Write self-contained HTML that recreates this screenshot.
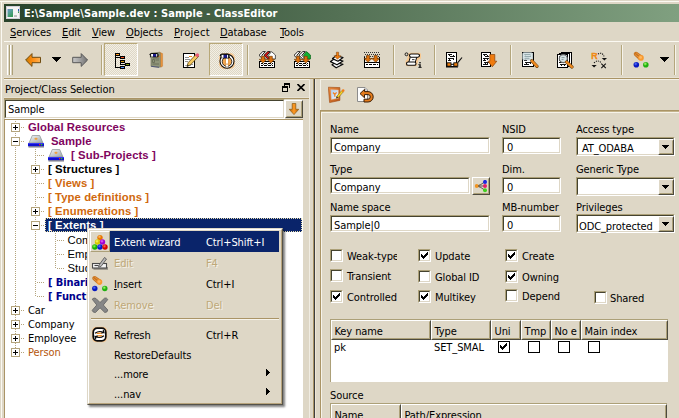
<!DOCTYPE html>
<html><head><meta charset="utf-8"><title>ClassEditor</title>
<style>
:root{--face:#ded7c6;--hi:#ffffff;--lt:#f1efe2;--sh:#aca078;--dk:#4c4a3e;}
*{box-sizing:border-box;margin:0;padding:0}
html,body{width:679px;height:418px;overflow:hidden;background:var(--face)}
body{position:relative;font-family:"DejaVu Sans Condensed","Liberation Sans",sans-serif;font-size:11px;color:#000;line-height:13px;letter-spacing:-0.1px}
.a{position:absolute;white-space:nowrap}
.t{position:absolute;white-space:nowrap;height:13px;line-height:13px}
u{text-decoration:underline;text-underline-offset:1px}
.ar{font-family:"Liberation Sans",sans-serif;letter-spacing:0.08px}
.b{font-weight:bold}
.sunk{border:1px solid;border-color:var(--sh) var(--hi) var(--hi) var(--sh);background:#fff}
.sunk>i{position:absolute;left:0;top:0;right:0;bottom:0;border:1px solid;border-color:#45432f var(--face) var(--face) #45432f}
.raised{border:1px solid;border-color:var(--hi) var(--dk) var(--dk) var(--hi);background:var(--face)}
.raised>i{position:absolute;left:0;top:0;right:0;bottom:0;border:1px solid;border-color:var(--face) var(--sh) var(--sh) var(--face)}
.vsep{position:absolute;width:2px;border-left:1px solid #b4a67c;border-right:1px solid #f6f3ea}
.hsep{position:absolute;height:2px;border-top:1px solid #aa9466;border-bottom:1px solid #f6f3ea}
.cb{position:absolute;width:13px;height:13px;border:1px solid;border-color:var(--sh) var(--hi) var(--hi) var(--sh);background:#fff}
.cb>i{position:absolute;left:0;top:0;right:0;bottom:0;border:1px solid;border-color:#45432f var(--face) var(--face) #45432f}
.cb svg,.fcb svg{position:absolute;left:2px;top:2px}
.fcb{position:absolute;width:12px;height:12px;border:1px solid #000;background:#fff}
.fcb svg{left:1px;top:1px}
.tree .t{font-size:11px}
.dot-h{position:absolute;height:1px;background-image:linear-gradient(to right,#b4a47c 50%,transparent 50%);background-size:2px 1px}
.dot-v{position:absolute;width:1px;background-image:linear-gradient(to bottom,#b4a47c 50%,transparent 50%);background-size:1px 2px}
.pm{position:absolute;width:9px;height:9px;border:1px solid #b4a47c;background:#fff}
.pm:before{content:"";position:absolute;left:1px;top:3px;width:5px;height:1px;background:#000}
.pm.p:after{content:"";position:absolute;left:3px;top:1px;width:1px;height:5px;background:#000}
.press{border:1px solid;border-color:#b8a878 #fff #fff #b8a878;background-color:var(--face);background-image:linear-gradient(45deg,#f3efe4 25%,transparent 25%,transparent 75%,#f3efe4 75%),linear-gradient(45deg,#f3efe4 25%,transparent 25%,transparent 75%,#f3efe4 75%);background-size:2px 2px;background-position:0 0,1px 1px}
</style></head><body>
<!-- window frame -->
<div class="a" style="left:0;top:1px;width:679px;height:1px;background:#fbf9f2"></div>
<div class="a" style="left:1px;top:1px;width:1px;height:417px;background:#fbf9f2"></div>
<div class="a" style="left:4px;top:4px;width:675px;height:18px;background:linear-gradient(to right,#28422a 0px,#80a080 675px)"></div>
<svg class="a" style="left:6px;top:6px" width="14" height="13" viewBox="0 0 14 13">
<rect x="0" y="0" width="14" height="13" fill="#f6f4f4"/><rect x="0.500" y="0.500" width="13" height="12" fill="none" stroke="#d4d0d8"/>
<defs><linearGradient id="ig" x1="0" y1="0" x2="0.600" y2="1"><stop offset="0" stop-color="#6a8cc8"/><stop offset="0.400" stop-color="#5aa0a0"/><stop offset="1" stop-color="#3a9a5a"/></linearGradient></defs>
<rect x="1.500" y="3" width="5.500" height="8" fill="url(#ig)"/><rect x="8" y="9.300" width="3" height="1.500" fill="#b0b0b0"/><rect x="12" y="3" width="1" height="2.500" fill="#2c58b8"/><rect x="12" y="5.500" width="1" height="1.500" fill="#3a9a4a"/></svg>
<div class="t b" style="left:24px;top:7px;color:#fff;font-size:11px;letter-spacing:0.07px">E:\Sample\Sample.dev : Sample - ClassEditor</div>
<div class="t " style="left:10px;top:26px;"><u>S</u>ervices</div>
<div class="t " style="left:62px;top:26px;"><u>E</u>dit</div>
<div class="t " style="left:92px;top:26px;"><u>V</u>iew</div>
<div class="t " style="left:126px;top:26px;"><u>O</u>bjects</div>
<div class="t " style="left:174px;top:26px;letter-spacing:0.3px"><u>P</u>roject</div>
<div class="t " style="left:220px;top:26px;"><u>D</u>atabase</div>
<div class="t " style="left:280px;top:26px;"><u>T</u>ools</div>
<div class="a" style="left:4px;top:41px;width:675px;height:1px;background:#fbf9f2"></div>
<div class="a" style="left:7px;top:45px;width:3px;height:30px;border-left:1px solid #fff;border-right:1px solid var(--sh);"></div>
<div class="a" style="left:10px;top:45px;width:3px;height:30px;border-left:1px solid #fff;border-right:1px solid var(--sh);"></div>
<div class="vsep" style="left:101px;top:45px;height:30px"></div>
<div class="vsep" style="left:247px;top:45px;height:30px"></div>
<div class="vsep" style="left:393px;top:45px;height:30px"></div>
<div class="vsep" style="left:434px;top:45px;height:30px"></div>
<div class="vsep" style="left:510px;top:45px;height:30px"></div>
<div class="vsep" style="left:621px;top:45px;height:30px"></div>
<div class="vsep" style="left:674px;top:45px;height:30px"></div>
<div class="a" style="left:4px;top:77px;width:675px;height:1px;background:#e7e2d4"></div>
<div class="a" style="left:4px;top:78px;width:675px;height:1px;background:#aa9466"></div>
<div class="a" style="left:4px;top:79px;width:306px;height:1px;background:#f6f3ea"></div>
<div class="a" style="left:309px;top:79px;width:1px;height:340px;background:#f0ece2"></div>
<div class="a press" style="left:104px;top:43px;width:34px;height:33px"></div>
<div class="a press" style="left:209px;top:43px;width:34px;height:33px"></div>
<svg class="a" style="left:52px;top:57px" width="9" height="5" viewBox="0 0 9 5" shape-rendering="crispEdges"><path d="M0 0h9v1h-1v1h-1v1h-1v1h-1v1h-1v-1h-1v-1h-1v-1h-1v-1h-1z" fill="#000"/></svg>
<svg class="a" style="left:660px;top:57px" width="9" height="5" viewBox="0 0 9 5" shape-rendering="crispEdges"><path d="M0 0h9v1h-1v1h-1v1h-1v1h-1v1h-1v-1h-1v-1h-1v-1h-1v-1h-1z" fill="#000"/></svg>
<svg class="a" style="left:25px;top:53px" width="18" height="18" viewBox="0 0 18 18"><defs><linearGradient id="gb" x1="0" y1="0" x2="1" y2="0"><stop offset="0" stop-color="#b87c08"/><stop offset="0.300" stop-color="#f08408"/><stop offset="0.600" stop-color="#ff9420"/><stop offset="1" stop-color="#ffb458"/></linearGradient></defs>
<path d="M0.600 7 L7 0.600 L7 4.300 L15.500 4.300 L15.500 9.700 L7 9.700 L7 13.400 Z" fill="url(#gb)" stroke="#6e4c12" stroke-width="1"/></svg>
<svg class="a" style="left:72px;top:53px" width="18" height="18" viewBox="0 0 18 18"><defs><linearGradient id="gf" x1="0" y1="0" x2="1" y2="0"><stop offset="0" stop-color="#c8c8c8"/><stop offset="0.500" stop-color="#a0a0a0"/><stop offset="1" stop-color="#707070"/></linearGradient></defs>
<path d="M15.600 7 L9.200 0.600 L9.200 4.300 L0.700 4.300 L0.700 9.700 L9.200 9.700 L9.200 13.400 Z" fill="url(#gf)" stroke="#585858" stroke-width="1"/></svg>
<svg class="a" style="left:114px;top:52px" width="18" height="18" viewBox="0 0 18 18"><g shape-rendering="crispEdges"><rect x="1" y="1" width="1" height="15" fill="#000"/>
<rect x="1" y="1" width="5" height="3" fill="#000"/><rect x="2" y="2" width="3" height="1" fill="#ff9a20"/>
<rect x="2" y="5" width="4" height="1" fill="#000"/><rect x="6" y="4" width="5" height="3" fill="#000"/><rect x="7" y="5" width="3" height="1" fill="#f05020"/>
<rect x="6" y="8" width="5" height="3" fill="#000"/><rect x="7" y="9" width="3" height="1" fill="#cc9410"/>
<rect x="6" y="11" width="1" height="2" fill="#000"/><rect x="6" y="12" width="5" height="1" fill="#000"/>
<rect x="11" y="11" width="5" height="3" fill="#000"/><rect x="12" y="12" width="3" height="1" fill="#80980c"/>
<rect x="2" y="15" width="4" height="1" fill="#000"/><rect x="6" y="14" width="5" height="3" fill="#000"/><rect x="7" y="15" width="3" height="1" fill="#4888f0"/></g></svg>
<svg class="a" style="left:148px;top:51px" width="18" height="18" viewBox="0 0 18 18"><path d="M3 2.200 L11.500 1.300 L12.800 2.200 L12.800 15.800 L11 16.300 L3 15.300 Z" fill="#8f9478" stroke="#70745c" stroke-width="0.600"/>
<path d="M11.500 1.300 L14.600 2.600 L14.600 15.200 L12.800 16.200 L12.800 2.300 Z" fill="#f09a40" stroke="#b86c20" stroke-width="0.400"/>
<path d="M4.500 8.500 h2 v3 h-2 z M7.500 9 h3.500 M4.500 13 h6.500 M5 7 h6" stroke="#6c705a" stroke-width="1" fill="none"/><path d="M9 6 l2.500 -0.800" stroke="#f08820" stroke-width="1.200"/>
<path d="M3.200 15.300 L11 16.300" stroke="#404878" stroke-width="0.800"/><g transform="translate(1.3,1.8)"><path d="M0 1.800 q0.500 -1.600 2.500 -1.700 l5 0 q1.800 0.200 1.800 1.800 l0 1.600 q0 1 -1.200 1 l-5 0 l-1 -0.600 l-1.200 0.900 l-0.400 -0.700 l0.700 -1 z" fill="#0a0a0a"/><rect x="1.800" y="1.200" width="2" height="2.600" fill="#fff"/><rect x="3.800" y="1.200" width="3" height="2.600" fill="#1a1a90"/><rect x="6.900" y="1.200" width="1" height="2.600" fill="#fff"/></g></svg>
<svg class="a" style="left:182px;top:52px" width="18" height="18" viewBox="0 0 18 18"><g shape-rendering="crispEdges"><rect x="1" y="1" width="12" height="15" fill="#000"/><rect x="2" y="2" width="10" height="13" fill="#fff"/>
<rect x="3" y="5" width="4" height="1" fill="#909090"/><rect x="7" y="4" width="3" height="1" fill="#f08818"/><rect x="3" y="7" width="5" height="1" fill="#909090"/><rect x="3" y="9" width="3" height="1" fill="#909090"/><rect x="8" y="12" width="3" height="1" fill="#909090"/><rect x="3" y="13" width="6" height="1" fill="#b0b0b0"/></g>
<path d="M5 14.5 L6.2 10.6 L14.2 2.2 L16.6 4.4 L8.6 12.8 Z" fill="#f4c860" stroke="#5a4410" stroke-width="0.8"/>
<path d="M13 3.4 L14.6 1.6 q1 -0.8 2 0.2 q1 1 0.2 2 L15.4 5.4 Z" fill="#e85a78"/>
<path d="M5 14.5 L5.6 12.4 L7 13.8 Z" fill="#222"/></svg>
<svg class="a" style="left:218px;top:52px" width="18" height="18" viewBox="0 0 18 18"><rect x="1" y="1" width="16" height="16" rx="5" fill="#f8c488" opacity="0.850"/>
<circle cx="9" cy="9.200" r="7" fill="#fff" stroke="#0a0a0a" stroke-width="1.100"/><circle cx="9" cy="9.600" r="4.800" fill="#f4a850" stroke="#0a0a0a" stroke-width="0.800"/>
<rect x="7.300" y="5.500" width="3.400" height="9" fill="#c08850" opacity="0.600"/>
<rect x="8" y="4.800" width="2" height="6.800" fill="#fff"/><rect x="8" y="12.600" width="2" height="2" fill="#fff"/><g transform="translate(1.6,1.5) scale(1.08,1.12)"><g transform="translate(0,0)"><path d="M0 1.800 q0.500 -1.600 2.500 -1.700 l5 0 q1.800 0.200 1.800 1.800 l0 1.600 q0 1 -1.200 1 l-5 0 l-1 -0.600 l-1.200 0.900 l-0.400 -0.700 l0.700 -1 z" fill="#0a0a0a"/><rect x="1.800" y="1.200" width="2" height="2.600" fill="#fff"/><rect x="3.800" y="1.200" width="3" height="2.600" fill="#1a1a90"/><rect x="6.900" y="1.200" width="1" height="2.600" fill="#fff"/></g></g></svg>
<svg class="a" style="left:258px;top:51px" width="18" height="18" viewBox="0 0 18 18"><g shape-rendering="crispEdges"><rect x="1" y="10" width="16" height="7" fill="#000"/><rect x="2" y="11" width="14" height="5" fill="#fff"/><rect x="3" y="12" width="1" height="1" fill="#000"/><rect x="4" y="12" width="1" height="1" fill="#000"/><rect x="6" y="12" width="1" height="1" fill="#000"/><rect x="7" y="12" width="1" height="1" fill="#000"/><rect x="8" y="12" width="1" height="1" fill="#000"/><rect x="10" y="12" width="1" height="1" fill="#000"/><rect x="11" y="12" width="1" height="1" fill="#000"/><rect x="12" y="12" width="1" height="1" fill="#000"/><rect x="14" y="12" width="1" height="1" fill="#000"/><rect x="3" y="14" width="1" height="1" fill="#000"/><rect x="4" y="14" width="1" height="1" fill="#000"/><rect x="6" y="14" width="1" height="1" fill="#000"/><rect x="7" y="14" width="1" height="1" fill="#000"/><rect x="8" y="14" width="1" height="1" fill="#000"/><rect x="10" y="14" width="1" height="1" fill="#000"/><rect x="11" y="14" width="1" height="1" fill="#000"/><rect x="12" y="14" width="1" height="1" fill="#000"/><rect x="14" y="14" width="1" height="1" fill="#000"/><rect x="5" y="13" width="1" height="1" fill="#000" opacity="0.600"/><rect x="9" y="13" width="1" height="1" fill="#000" opacity="0.600"/><rect x="13" y="13" width="1" height="1" fill="#000" opacity="0.600"/></g><path d="M4.8 0.600 L1.0 4.300 L4.8 8 L7.3 8 L3.8 4.300 L7.3 0.600 Z" fill="#fff" stroke="#111" stroke-width="0.900"/><path d="M13.500 0.600 L17.400 4 L17.400 8 L12.500 8 L10.500 4.300 Z" fill="#fff" stroke="#333" stroke-width="0.800"/><path d="M9.8 0.600 L6.0 4.300 L9.8 8 L12.3 8 L8.8 4.300 L12.3 0.600 Z" fill="#f01010" stroke="#111" stroke-width="0.900"/><path d="M3.5 5.3 h3 v3 h2.200 l-3.700 3.800 l-3.700 -3.800 h2.200 z" fill="#dc700c" stroke="#7a4008" stroke-width="0.700"/><path d="M11.3 5.3 h3 v3 h2.200 l-3.700 3.800 l-3.700 -3.800 h2.200 z" fill="#dc700c" stroke="#7a4008" stroke-width="0.700"/></svg>
<svg class="a" style="left:293px;top:51px" width="18" height="18" viewBox="0 0 18 18"><g shape-rendering="crispEdges"><rect x="1" y="10" width="16" height="7" fill="#000"/><rect x="2" y="11" width="14" height="5" fill="#fff"/><rect x="3" y="12" width="1" height="1" fill="#000"/><rect x="4" y="12" width="1" height="1" fill="#000"/><rect x="6" y="12" width="1" height="1" fill="#000"/><rect x="7" y="12" width="1" height="1" fill="#000"/><rect x="8" y="12" width="1" height="1" fill="#000"/><rect x="10" y="12" width="1" height="1" fill="#000"/><rect x="11" y="12" width="1" height="1" fill="#000"/><rect x="12" y="12" width="1" height="1" fill="#000"/><rect x="14" y="12" width="1" height="1" fill="#000"/><rect x="3" y="14" width="1" height="1" fill="#000"/><rect x="4" y="14" width="1" height="1" fill="#000"/><rect x="6" y="14" width="1" height="1" fill="#000"/><rect x="7" y="14" width="1" height="1" fill="#000"/><rect x="8" y="14" width="1" height="1" fill="#000"/><rect x="10" y="14" width="1" height="1" fill="#000"/><rect x="11" y="14" width="1" height="1" fill="#000"/><rect x="12" y="14" width="1" height="1" fill="#000"/><rect x="14" y="14" width="1" height="1" fill="#000"/><rect x="5" y="13" width="1" height="1" fill="#000" opacity="0.600"/><rect x="9" y="13" width="1" height="1" fill="#000" opacity="0.600"/><rect x="13" y="13" width="1" height="1" fill="#000" opacity="0.600"/></g><path d="M4.8 0.600 L1.0 4.300 L4.8 8 L7.3 8 L3.8 4.300 L7.3 0.600 Z" fill="#fff" stroke="#111" stroke-width="0.900"/><path d="M13.500 0.600 L17.400 4 L17.400 8 L12.500 8 L10.500 4.300 Z" fill="#10b030" stroke="#0a6a1a" stroke-width="0.800"/><path d="M9.8 0.600 L6.0 4.300 L9.8 8 L12.3 8 L8.8 4.300 L12.3 0.600 Z" fill="#fff" stroke="#111" stroke-width="0.900"/><path d="M3.5 5.3 h3 v3 h2.200 l-3.700 3.800 l-3.700 -3.800 h2.200 z" fill="#dc700c" stroke="#7a4008" stroke-width="0.700"/><path d="M11.3 5.3 h3 v3 h2.200 l-3.700 3.800 l-3.700 -3.800 h2.200 z" fill="#dc700c" stroke="#7a4008" stroke-width="0.700"/></svg>
<svg class="a" style="left:329px;top:51px" width="18" height="18" viewBox="0 0 18 18"><path d="M3 13.800 L6.500 11.500 L14 13.300 L7.200 16.800 Z" fill="#fff" stroke="#0a0a0a" stroke-width="1.200" stroke-linejoin="round"/>
<path d="M1.500 10.600 L5.500 7.800 L14 10 L8 13.800 Z" fill="#fff" stroke="#0a0a0a" stroke-width="1.200" stroke-linejoin="round"/>
<path d="M3.500 7.600 L7.500 4.600 L14 6.600 L9 10.200 Z" fill="#fff" stroke="#0a0a0a" stroke-width="1.200" stroke-linejoin="round"/>
<path d="M7.400 1.200 h2.200 v3.600 h2.400 l-3.500 3.500 l-3.500 -3.500 h2.400 z" fill="#f07c10" stroke="#7a3c08" stroke-width="0.500"/></svg>
<svg class="a" style="left:363px;top:51px" width="18" height="18" viewBox="0 0 18 18"><g shape-rendering="crispEdges"><rect x="1" y="1" width="1" height="1" fill="#333"/><rect x="3" y="1" width="1" height="1" fill="#333"/><rect x="5" y="1" width="1" height="1" fill="#333"/><rect x="7" y="1" width="1" height="1" fill="#333"/><rect x="9" y="1" width="1" height="1" fill="#333"/><rect x="11" y="1" width="1" height="1" fill="#333"/><rect x="13" y="1" width="1" height="1" fill="#333"/><rect x="15" y="1" width="1" height="1" fill="#333"/><rect x="2" y="3" width="1" height="1" fill="#333"/><rect x="4" y="3" width="1" height="1" fill="#333"/><rect x="6" y="3" width="1" height="1" fill="#333"/><rect x="8" y="3" width="1" height="1" fill="#333"/><rect x="10" y="3" width="1" height="1" fill="#333"/><rect x="12" y="3" width="1" height="1" fill="#333"/><rect x="14" y="3" width="1" height="1" fill="#333"/><rect x="16" y="3" width="1" height="1" fill="#333"/><rect x="1" y="5" width="1" height="1" fill="#333"/><rect x="3" y="5" width="1" height="1" fill="#333"/><rect x="5" y="5" width="1" height="1" fill="#333"/><rect x="7" y="5" width="1" height="1" fill="#333"/><rect x="9" y="5" width="1" height="1" fill="#333"/><rect x="11" y="5" width="1" height="1" fill="#333"/><rect x="13" y="5" width="1" height="1" fill="#333"/><rect x="15" y="5" width="1" height="1" fill="#333"/><rect x="2" y="7" width="1" height="1" fill="#333"/><rect x="4" y="7" width="1" height="1" fill="#333"/><rect x="6" y="7" width="1" height="1" fill="#333"/><rect x="8" y="7" width="1" height="1" fill="#333"/><rect x="10" y="7" width="1" height="1" fill="#333"/><rect x="12" y="7" width="1" height="1" fill="#333"/><rect x="14" y="7" width="1" height="1" fill="#333"/><rect x="16" y="7" width="1" height="1" fill="#333"/><rect x="1" y="9" width="1" height="1" fill="#333"/><rect x="3" y="9" width="1" height="1" fill="#333"/><rect x="5" y="9" width="1" height="1" fill="#333"/><rect x="7" y="9" width="1" height="1" fill="#333"/><rect x="9" y="9" width="1" height="1" fill="#333"/><rect x="11" y="9" width="1" height="1" fill="#333"/><rect x="13" y="9" width="1" height="1" fill="#333"/><rect x="15" y="9" width="1" height="1" fill="#333"/><rect x="1" y="6" width="1" height="6" fill="#000"/><rect x="16" y="6" width="1" height="6" fill="#000"/><rect x="2" y="9" width="14" height="3" fill="#f4f0e6"/></g><g shape-rendering="crispEdges"><rect x="1" y="11" width="16" height="6" fill="#000"/><rect x="2" y="12" width="14" height="4" fill="#fff"/><rect x="3" y="13" width="1" height="1" fill="#000"/><rect x="4" y="13" width="1" height="1" fill="#000"/><rect x="6" y="13" width="1" height="1" fill="#000"/><rect x="7" y="13" width="1" height="1" fill="#000"/><rect x="8" y="13" width="1" height="1" fill="#000"/><rect x="10" y="13" width="1" height="1" fill="#000"/><rect x="11" y="13" width="1" height="1" fill="#000"/><rect x="12" y="13" width="1" height="1" fill="#000"/><rect x="14" y="13" width="1" height="1" fill="#000"/></g><path d="M3.5 4.5 h3 v3 h2.200 l-3.700 3.800 l-3.700 -3.800 h2.200 z" fill="#dc700c" stroke="#7a4008" stroke-width="0.700"/><path d="M11.2 4.5 h3 v3 h2.200 l-3.700 3.800 l-3.700 -3.800 h2.200 z" fill="#dc700c" stroke="#7a4008" stroke-width="0.700"/></svg>
<svg class="a" style="left:404px;top:51px" width="18" height="18" viewBox="0 0 18 18"><path d="M4.500 1.800 h11 q1.500 0 1.500 1.500 v3.500 q0 1.500 -1.500 1.500 h-1 l-1 4.500 q0 2.500 -2 2.500 h-8 q-2 0 -2 -2 v-3 q0 -1.500 1.500 -1.500 l0.800 -4 q0.200 -3 1.700 -3z" fill="#f8c890"/>
<path d="M6.300 6 L4.800 11.200 L11.300 11.200 L12.800 6 Z" fill="#fff"/><path d="M6.300 6 L4.800 11.200 M12.800 6 L11.300 11.200" stroke="#0a0a0a" stroke-width="1"/>
<rect x="5.500" y="3" width="10" height="3.200" rx="1.600" fill="#fff" stroke="#0a0a0a" stroke-width="1.100"/>
<rect x="2.500" y="11" width="9.500" height="3.300" rx="1.650" fill="#fff" stroke="#0a0a0a" stroke-width="1.100"/>
<path d="M8 8.600 h2.500" stroke="#0a0a0a" stroke-width="0.800"/>
<circle cx="2.500" cy="3.300" r="1.450" fill="none" stroke="#0a0a0a" stroke-width="0.900"/>
<rect x="15.300" y="11" width="1.400" height="1.400" fill="#0a0a0a"/><rect x="15.300" y="13.200" width="1.400" height="3" fill="#0a0a0a"/><rect x="14.400" y="13.200" width="1" height="0.900" fill="#0a0a0a"/><rect x="14.400" y="15.900" width="3.200" height="0.900" fill="#0a0a0a"/></svg>
<svg class="a" style="left:445px;top:51px" width="18" height="18" viewBox="0 0 18 18"><g shape-rendering="crispEdges"><rect x="1" y="1" width="11" height="15" fill="#000"/><rect x="2" y="2" width="9" height="13" fill="#fff"/><rect x="3" y="3" width="4" height="1" fill="#111"/><rect x="4" y="4" width="1" height="1" fill="#111"/><rect x="8" y="4" width="1" height="1" fill="#111"/><rect x="5" y="5" width="5" height="1" fill="#111"/><rect x="3" y="7" width="6" height="1" fill="#111"/><rect x="4" y="8" width="1" height="1" fill="#111"/><rect x="8" y="8" width="1" height="1" fill="#111"/><rect x="3" y="9" width="3" height="1" fill="#111"/><rect x="4" y="11" width="6" height="1" fill="#111"/><rect x="5" y="12" width="1" height="1" fill="#111"/><rect x="8" y="12" width="1" height="1" fill="#111"/><rect x="3" y="13" width="5" height="1" fill="#111"/></g><rect x="2" y="11" width="9" height="4" fill="#fff"/><rect x="2" y="11.800" width="4" height="3.400" fill="#f08010" stroke="#0a0a0a" stroke-width="0.900"/><rect x="8.800" y="11.800" width="4" height="3.400" fill="#f08010" stroke="#0a0a0a" stroke-width="0.900"/><path d="M6 13.300 h3 M1 16 h12" stroke="#0a0a0a" stroke-width="1"/><path d="M13 11.300 L17 6.500" stroke="#0a0a0a" stroke-width="1.100"/></svg>
<svg class="a" style="left:480px;top:51px" width="18" height="18" viewBox="0 0 18 18"><g shape-rendering="crispEdges"><rect x="1" y="1" width="10" height="15" fill="#000"/><rect x="2" y="2" width="8" height="13" fill="#fff"/><rect x="3" y="3" width="4" height="1" fill="#111"/><rect x="4" y="4" width="1" height="1" fill="#111"/><rect x="7" y="4" width="1" height="1" fill="#111"/><rect x="5" y="5" width="4" height="1" fill="#111"/><rect x="3" y="7" width="6" height="1" fill="#111"/><rect x="4" y="8" width="1" height="1" fill="#111"/><rect x="7" y="8" width="1" height="1" fill="#111"/><rect x="3" y="9" width="3" height="1" fill="#111"/><rect x="4" y="11" width="5" height="1" fill="#111"/><rect x="5" y="12" width="1" height="1" fill="#111"/><rect x="7" y="12" width="1" height="1" fill="#111"/><rect x="3" y="13" width="5" height="1" fill="#111"/></g><path d="M9.800 3.500 h5 v6.700 h2 l-4.500 5.600 l-4.500 -5.600 h2 z" fill="#f07c10" stroke="#8a4208" stroke-width="0.700"/></svg>
<svg class="a" style="left:521px;top:51px" width="18" height="18" viewBox="0 0 18 18"><g shape-rendering="crispEdges"><rect x="1" y="1" width="12" height="15" fill="#000"/><rect x="2" y="2" width="10" height="13" fill="#fff"/><rect x="3" y="3" width="4" height="1" fill="#111"/><rect x="4" y="4" width="1" height="1" fill="#111"/><rect x="9" y="4" width="1" height="1" fill="#111"/><rect x="5" y="5" width="5" height="1" fill="#111"/><rect x="3" y="7" width="6" height="1" fill="#111"/><rect x="4" y="8" width="1" height="1" fill="#111"/><rect x="9" y="8" width="1" height="1" fill="#111"/><rect x="3" y="9" width="3" height="1" fill="#111"/><rect x="4" y="11" width="6" height="1" fill="#111"/><rect x="5" y="12" width="1" height="1" fill="#111"/><rect x="9" y="12" width="1" height="1" fill="#111"/><rect x="3" y="13" width="5" height="1" fill="#111"/></g><rect x="1.500" y="1.500" width="10" height="7.500" rx="1.500" fill="#d4e2e4" opacity="0.900" stroke="#9aaaac" stroke-width="0.600"/><path d="M3.500 3.500 h6 M3.500 5.500 h6.500 M4 7.300 h4" stroke="#98acb0" stroke-width="1"/><path d="M10.800 9.800 L16 15.300" stroke="#7a4a10" stroke-width="3.200" stroke-linecap="round"/><path d="M10.800 9.800 L16 15.300" stroke="#f08a20" stroke-width="2" stroke-linecap="round"/></svg>
<svg class="a" style="left:556px;top:51px" width="18" height="18" viewBox="0 0 18 18"><g shape-rendering="crispEdges"><rect x="5" y="1" width="11" height="13" fill="#000"/><rect x="6" y="2" width="9" height="11" fill="#fff"/><rect x="7" y="3" width="4" height="1" fill="#111"/><rect x="8" y="4" width="1" height="1" fill="#111"/><rect x="12" y="4" width="1" height="1" fill="#111"/><rect x="9" y="5" width="5" height="1" fill="#111"/><rect x="7" y="7" width="6" height="1" fill="#111"/><rect x="8" y="8" width="1" height="1" fill="#111"/><rect x="12" y="8" width="1" height="1" fill="#111"/><rect x="7" y="9" width="3" height="1" fill="#111"/><rect x="8" y="11" width="6" height="1" fill="#111"/></g><g shape-rendering="crispEdges"><rect x="3" y="2" width="11" height="14" fill="#000"/><rect x="4" y="3" width="9" height="12" fill="#fff"/><rect x="5" y="4" width="4" height="1" fill="#111"/><rect x="6" y="5" width="1" height="1" fill="#111"/><rect x="10" y="5" width="1" height="1" fill="#111"/><rect x="7" y="6" width="5" height="1" fill="#111"/><rect x="5" y="8" width="6" height="1" fill="#111"/><rect x="6" y="9" width="1" height="1" fill="#111"/><rect x="10" y="9" width="1" height="1" fill="#111"/><rect x="5" y="10" width="3" height="1" fill="#111"/><rect x="6" y="12" width="6" height="1" fill="#111"/><rect x="7" y="13" width="1" height="1" fill="#111"/><rect x="10" y="13" width="1" height="1" fill="#111"/></g><g shape-rendering="crispEdges"><rect x="1" y="3" width="11" height="13.5" fill="#000"/><rect x="2" y="4" width="9" height="11.5" fill="#fff"/><rect x="3" y="5" width="4" height="1" fill="#111"/><rect x="4" y="6" width="1" height="1" fill="#111"/><rect x="8" y="6" width="1" height="1" fill="#111"/><rect x="5" y="7" width="5" height="1" fill="#111"/><rect x="3" y="9" width="6" height="1" fill="#111"/><rect x="4" y="10" width="1" height="1" fill="#111"/><rect x="8" y="10" width="1" height="1" fill="#111"/><rect x="3" y="11" width="3" height="1" fill="#111"/><rect x="4" y="13" width="6" height="1" fill="#111"/><rect x="5" y="14" width="1" height="1" fill="#111"/><rect x="8" y="14" width="1" height="1" fill="#111"/></g><circle cx="7.300" cy="7.600" r="4" fill="#d8e4e4" stroke="#666" stroke-width="1.100"/><path d="M5.500 6.600 h3 M5.500 8.600 h2" stroke="#8a9a9a" stroke-width="1"/><path d="M10.600 11 L16 16" stroke="#7a4a10" stroke-width="3.200" stroke-linecap="round"/><path d="M10.600 11 L16 16" stroke="#f08a20" stroke-width="2" stroke-linecap="round"/></svg>
<svg class="a" style="left:590px;top:51px" width="18" height="18" viewBox="0 0 18 18"><text x="1.300" y="7.800" font-family="Liberation Sans,sans-serif" font-size="8.800" fill="#f08a18" stroke="#f08a18" stroke-width="0.600">R</text>
<path d="M8 3 q4.500 -2.500 6.500 3.500" fill="none" stroke="#111" stroke-width="1.100" stroke-dasharray="1.100 1.100"/><path d="M11.800 7 h5.200 l-2.600 2.500 z" fill="#111"/>
<path d="M4 12 q3.500 -4 7.500 0" fill="none" stroke="#111" stroke-width="1.100" stroke-dasharray="1.100 1.100"/><path d="M1.500 14 h5.200 l-2.600 2.600 z" fill="#111"/>
<path d="M11.300 12.700 l4.500 4.500 M15.800 12.700 l-4.500 4.500" stroke="#111" stroke-width="1.100"/></svg>
<svg class="a" style="left:632px;top:51px" width="18" height="18" viewBox="0 0 18 18"><g transform="translate(1.5,0.6)"><path d="M5.600 8.300 L0.600 3.600 Q-0.300 2.300 0.800 1 Q2 -0.200 3.600 0.500 L9.300 4.300 Z" fill="#c87420"/><path d="M1.200 2.600 L6 6.600 M2.600 1.200 L7.600 4.800" stroke="#e89440" stroke-width="0.900"/><circle cx="7.500" cy="6.300" r="2.800" fill="#f89a30"/><circle cx="7.100" cy="5.800" r="1.400" fill="#ffb860"/></g><defs><radialGradient id="bb1" cx="0.4" cy="0.35" r="0.65"><stop offset="0" stop-color="#5878ff"/><stop offset="0.55" stop-color="#0818c0"/><stop offset="1" stop-color="#0818c0"/></radialGradient></defs><circle cx="4.3" cy="13.7" r="2.8" fill="url(#bb1)"/><defs><radialGradient id="bb2" cx="0.4" cy="0.35" r="0.65"><stop offset="0" stop-color="#b0ff70"/><stop offset="0.55" stop-color="#20b010"/><stop offset="1" stop-color="#20b010"/></radialGradient></defs><circle cx="13.8" cy="13.7" r="2.8" fill="url(#bb2)"/></svg>
<div class="t " style="left:5px;top:83px;">Project/Class Selection</div>
<svg class="a" style="left:282px;top:83px" width="9" height="9" viewBox="0 0 9 9" shape-rendering="crispEdges"><path d="M2 0h6v5h-1v-3h-4v1h-1z" fill="#000"/><path d="M0 3h6v6h-6z M1 5v3h4v-3z" fill="#000" fill-rule="evenodd"/></svg>
<svg class="a" style="left:297px;top:84px" width="8" height="7" viewBox="0 0 8 7"><path d="M0.500 0 L7.500 7 M7.500 0 L0.500 7" stroke="#000" stroke-width="1.600"/></svg>
<div class="a" style="left:4px;top:97px;width:305px;height:1px;background:#e7e2d4"></div>
<div class="a" style="left:4px;top:98px;width:305px;height:1px;background:#aa9466"></div>
<div class="a sunk" style="left:4px;top:99px;width:281px;height:20px"><i></i></div>
<div class="t " style="left:8px;top:103px;">Sample</div>
<div class="a raised" style="left:285px;top:100px;width:18px;height:18px"><i></i></div>
<svg class="a" style="left:289px;top:103px" width="10" height="12" viewBox="0 0 10 12"><defs><linearGradient id="gd" x1="0" y1="0" x2="1" y2="0"><stop offset="0" stop-color="#c06400"/><stop offset="0.5" stop-color="#ff9a24"/><stop offset="1" stop-color="#b85c00"/></linearGradient></defs><path d="M3.200 0.500 h3.600 v5.800 h3 l-4.800 5.300 l-4.800 -5.300 h3 z" fill="url(#gd)" stroke="#8a5a14" stroke-width="0.700"/></svg>
<div class="a" style="left:4px;top:119px;width:299px;height:310px;background:#fff;border-left:1px solid #aa9466;border-top:1px solid #aa9466"></div>
<div class="dot-v" style="left:15px;top:120px;height:3px;background-position:0 1px"></div>
<div class="dot-v" style="left:15px;top:132px;height:5px;background-position:0 1px"></div>
<div class="dot-v" style="left:15px;top:146px;height:160px;background-position:0 1px"></div>
<div class="dot-v" style="left:15px;top:315px;height:5px;background-position:0 0px"></div>
<div class="dot-v" style="left:15px;top:329px;height:5px;background-position:0 0px"></div>
<div class="dot-v" style="left:15px;top:343px;height:5px;background-position:0 0px"></div>
<div class="pm p" style="left:11px;top:123px"></div>
<div class="dot-h" style="left:21px;top:127px;width:4px;background-position:0px 0"></div>
<div class="pm" style="left:11px;top:137px"></div>
<div class="dot-h" style="left:21px;top:141px;width:4px;background-position:0px 0"></div>
<div class="pm p" style="left:11px;top:306px"></div>
<div class="dot-h" style="left:21px;top:310px;width:4px;background-position:0px 0"></div>
<div class="pm p" style="left:11px;top:320px"></div>
<div class="dot-h" style="left:21px;top:324px;width:4px;background-position:0px 0"></div>
<div class="pm p" style="left:11px;top:334px"></div>
<div class="dot-h" style="left:21px;top:338px;width:4px;background-position:0px 0"></div>
<div class="pm p" style="left:11px;top:348px"></div>
<div class="dot-h" style="left:21px;top:352px;width:4px;background-position:0px 0"></div>
<div class="dot-v" style="left:35px;top:149px;height:16px;background-position:0 0px"></div>
<div class="dot-v" style="left:35px;top:174px;height:33px;background-position:0 1px"></div>
<div class="dot-v" style="left:35px;top:216px;height:5px;background-position:0 1px"></div>
<div class="dot-v" style="left:35px;top:230px;height:67px;background-position:0 1px"></div>
<div class="dot-h" style="left:36px;top:155px;width:9px;background-position:1px 0"></div>
<div class="pm p" style="left:31px;top:165px"></div>
<div class="dot-h" style="left:41px;top:169px;width:4px;background-position:0px 0"></div>
<div class="pm p" style="left:31px;top:207px"></div>
<div class="dot-h" style="left:41px;top:211px;width:4px;background-position:0px 0"></div>
<div class="pm" style="left:31px;top:221px"></div>
<div class="dot-h" style="left:41px;top:225px;width:4px;background-position:0px 0"></div>
<div class="dot-h" style="left:36px;top:183px;width:9px;background-position:1px 0"></div>
<div class="dot-h" style="left:36px;top:197px;width:9px;background-position:1px 0"></div>
<div class="dot-h" style="left:36px;top:282px;width:9px;background-position:1px 0"></div>
<div class="dot-h" style="left:36px;top:296px;width:9px;background-position:1px 0"></div>
<div class="dot-v" style="left:55px;top:232px;height:37px;background-position:0 1px"></div>
<div class="dot-h" style="left:56px;top:240px;width:9px;background-position:1px 0"></div>
<div class="dot-h" style="left:56px;top:254px;width:9px;background-position:1px 0"></div>
<div class="dot-h" style="left:56px;top:268px;width:9px;background-position:1px 0"></div>
<div class="a" style="left:45px;top:218px;width:257px;height:14px;background:#0a246a;outline:1px dotted #e8e0b0;outline-offset:-1px"></div>
<svg class="a" style="left:28px;top:135px" width="16" height="13" viewBox="0 0 16 13"><defs><linearGradient id="dg28" x1="0" y1="0" x2="1" y2="1"><stop offset="0" stop-color="#f4f6f6"/><stop offset="1" stop-color="#9aa4a8"/></linearGradient></defs><path d="M4.300 0.500 h7.400 l3.300 7.500 h-14 z" fill="url(#dg28)" stroke="#8a9094" stroke-width="0.700"/><ellipse cx="8" cy="3.800" rx="1.600" ry="1.100" fill="#f0a040"/><rect x="0" y="8" width="16" height="3.300" fill="#1010d0"/><rect x="0" y="8" width="16" height="1" fill="#3838f0"/><rect x="11" y="9" width="1.300" height="1.300" fill="#f02020"/><rect x="13" y="9" width="1.300" height="1.300" fill="#20d020"/><rect x="0.500" y="11.300" width="15.500" height="1.200" fill="#404048" opacity="0.700"/></svg>
<svg class="a" style="left:48px;top:149px" width="16" height="13" viewBox="0 0 16 13"><defs><linearGradient id="dg48" x1="0" y1="0" x2="1" y2="1"><stop offset="0" stop-color="#f4f6f6"/><stop offset="1" stop-color="#9aa4a8"/></linearGradient></defs><path d="M4.300 0.500 h7.400 l3.300 7.500 h-14 z" fill="url(#dg48)" stroke="#8a9094" stroke-width="0.700"/><ellipse cx="8" cy="3.800" rx="1.600" ry="1.100" fill="#f0a040"/><rect x="0" y="8" width="16" height="3.300" fill="#1010d0"/><rect x="0" y="8" width="16" height="1" fill="#3838f0"/><rect x="11" y="9" width="1.300" height="1.300" fill="#f02020"/><rect x="13" y="9" width="1.300" height="1.300" fill="#20d020"/><rect x="0.500" y="11.300" width="15.500" height="1.200" fill="#404048" opacity="0.700"/></svg>
<div class="t ar b" style="left:28px;top:121px;color:#80045e;font-size:11.300px;">Global Resources</div>
<div class="t ar b" style="left:51px;top:135px;color:#80045e;font-size:11.300px;">Sample</div>
<div class="t ar b" style="left:71px;top:149px;color:#80045e;font-size:11.300px;">[ Sub-Projects ]</div>
<div class="t ar b" style="left:48px;top:163px;color:#000;font-size:11.300px;">[ Structures ]</div>
<div class="t ar b" style="left:48px;top:177px;color:#d0680c;font-size:11.300px;">[ Views ]</div>
<div class="t ar b" style="left:48px;top:191px;color:#d0680c;font-size:11.300px;">[ Type definitions ]</div>
<div class="t ar b" style="left:48px;top:205px;color:#d0680c;font-size:11.300px;">[ Enumerations ]</div>
<div class="t ar b" style="left:48px;top:219px;color:#fff;font-size:11.300px;">[ Extents ]</div>
<div class="t ar" style="left:67.5px;top:234px;color:#000;font-size:11.300px;">Company</div>
<div class="t ar" style="left:67.5px;top:248px;color:#000;font-size:11.300px;">Employee</div>
<div class="t ar" style="left:67.5px;top:262px;color:#000;font-size:11.300px;">Student</div>
<div class="t b" style="left:48px;top:276px;color:#00008c;">[ Binaries ]</div>
<div class="t b" style="left:48px;top:290px;color:#00008c;">[ Functions ]</div>
<div class="t " style="left:28px;top:304px;color:#000;">Car</div>
<div class="t " style="left:28px;top:318px;color:#000;">Company</div>
<div class="t " style="left:28px;top:332px;color:#000;">Employee</div>
<div class="t " style="left:28px;top:346px;color:#b4560c;">Person</div>
<div class="a" style="left:313px;top:79px;width:1px;height:340px;background:#aa9466"></div>
<div class="a" style="left:314px;top:79px;width:1px;height:340px;background:#3e3e3e"></div>
<div class="a" style="left:315px;top:79px;width:1px;height:340px;background:#efe7d6"></div>
<div class="a" style="left:320px;top:79px;width:359px;height:1px;background:#f4f1e8"></div>
<div class="a" style="left:320px;top:79px;width:1px;height:31px;background:#f4f1e8"></div>
<div class="a" style="left:320px;top:110px;width:359px;height:1px;background:#aa9466"></div>
<div class="a" style="left:320px;top:111px;width:359px;height:1px;background:#c4b48c"></div>
<div class="a" style="left:320px;top:110px;width:1px;height:310px;background:#aa9466"></div>
<div class="a" style="left:321px;top:112px;width:358px;height:1px;background:#f6f3ea"></div>
<div class="a" style="left:321px;top:112px;width:1px;height:310px;background:#f6f3ea"></div>
<svg class="a" style="left:328px;top:86px" width="18" height="18" viewBox="0 0 18 18"><defs><linearGradient id="fr1" x1="0" y1="0" x2="1" y2="1"><stop offset="0" stop-color="#e8883c"/><stop offset="1" stop-color="#b85418"/></linearGradient><linearGradient id="fr2" x1="0" y1="0" x2="1" y2="1"><stop offset="0" stop-color="#a8ccf4"/><stop offset="1" stop-color="#f0f6fc"/></linearGradient></defs>
<path d="M0.300 1.200 L11.900 1.600 L11.900 14.400 L1.600 16.600 Z" fill="url(#fr1)" stroke="#a04c14" stroke-width="0.600"/>
<path d="M2.700 3.600 L10.300 4 L10.300 12.300 L3.300 13.600 Z" fill="url(#fr2)" stroke="#f0b080" stroke-width="0.500"/>
<path d="M5 6.500 L6.800 8.500 L8.600 6.300 M6.800 8.500 L6.800 10.800" stroke="#f08428" stroke-width="1.300" fill="none"/>
<path d="M8.800 10.300 L13.800 4.600 L15.300 5.900 L10.300 11.600 L8.300 12.300 Z" fill="#f8d428" stroke="#705010" stroke-width="0.500"/><path d="M8.300 12.300 L8.800 10.300 L10.300 11.600 Z" fill="#222"/><circle cx="15.200" cy="4.600" r="1.300" fill="#f47c18"/></svg>
<svg class="a" style="left:356px;top:86px" width="18" height="18" viewBox="0 0 18 18"><path d="M1.500 1.500 h7.500 l2.500 2.500 v11.500 h-10 z" fill="#fdfdfd" stroke="#8c8c8c" stroke-width="1"/><path d="M9 1.500 v2.500 h2.500" fill="#e8e8e8" stroke="#8c8c8c" stroke-width="0.700"/>
<path d="M4 7.600 L8.500 3.400 L8.500 5.600 L12 5.600 A5.200 5.200 0 0 1 12 16 L8 16 L8 13.200 L12 13.200 A2.300 2.300 0 0 0 12 8.600 L8.500 8.600 L8.500 11.800 Z" fill="#e47c1c" stroke="#3a1c04" stroke-width="1" stroke-linejoin="round"/></svg>
<div class="t " style="left:330px;top:123px;">Name</div>
<div class="a sunk" style="left:330px;top:137px;width:160px;height:17px"><i></i></div><div class="t " style="left:334px;top:141.0px;">Company</div>
<div class="t " style="left:330px;top:163px;">Type</div>
<div class="a sunk" style="left:330px;top:177px;width:140px;height:17px"><i></i></div><div class="t " style="left:334px;top:181.0px;">Company</div>
<div class="a raised" style="left:472px;top:177px;width:18px;height:18px"><i></i></div>
<svg class="a" style="left:474px;top:180px" width="14" height="13" viewBox="0 0 14 13"><path d="M3 6 Q7 5 10.500 2 M3 6 L10.500 6 M3 6 Q7 7 10.500 10" stroke="#222" stroke-width="0.700" fill="none"/>
<circle cx="2.700" cy="6" r="1.900" fill="#f09420"/><circle cx="11" cy="1.900" r="2" fill="#1c28e0"/><circle cx="11" cy="6" r="2" fill="#e0206c"/><circle cx="11" cy="10.200" r="2" fill="#40d020"/></svg>
<div class="t " style="left:330px;top:201px;">Name space</div>
<div class="a sunk" style="left:330px;top:215px;width:160px;height:17px"><i></i></div><div class="t " style="left:334px;top:219.0px;">Sample<span style="letter-spacing:0">|</span>0</div>
<div class="t " style="left:502px;top:123px;">NSID</div>
<div class="a sunk" style="left:502px;top:137px;width:59px;height:17px"><i></i></div><div class="t " style="left:507px;top:141.0px;">0</div>
<div class="t " style="left:502px;top:163px;">Dim.</div>
<div class="a sunk" style="left:502px;top:177px;width:59px;height:17px"><i></i></div><div class="t " style="left:507px;top:181.0px;">0</div>
<div class="t " style="left:502px;top:201px;">MB-number</div>
<div class="a sunk" style="left:502px;top:215px;width:59px;height:17px"><i></i></div><div class="t " style="left:507px;top:219.0px;">0</div>
<div class="t " style="left:576px;top:123px;">Access type</div>
<div class="a sunk" style="left:576px;top:137px;width:99px;height:19px"><i></i></div><div class="a raised" style="left:658px;top:139px;width:16px;height:16px"><i></i></div><svg class="a" style="left:662px;top:145px" width="7" height="4" viewBox="0 0 7 4" shape-rendering="crispEdges"><path d="M0 0h7v1h-1v1h-1v1h-1v1h-1v-1h-1v-1h-1v-1h-1z" fill="#000"/></svg><div class="t " style="left:582px;top:142px;">AT_ODABA</div>
<div class="t " style="left:576px;top:163px;">Generic Type</div>
<div class="a sunk" style="left:576px;top:177px;width:99px;height:19px"><i></i></div><div class="a raised" style="left:658px;top:179px;width:16px;height:16px"><i></i></div><svg class="a" style="left:662px;top:185px" width="7" height="4" viewBox="0 0 7 4" shape-rendering="crispEdges"><path d="M0 0h7v1h-1v1h-1v1h-1v1h-1v-1h-1v-1h-1v-1h-1z" fill="#000"/></svg>
<div class="t " style="left:576px;top:201px;">Privileges</div>
<div class="a sunk" style="left:576px;top:214px;width:99px;height:19px"><i></i></div><div class="a raised" style="left:658px;top:216px;width:16px;height:16px"><i></i></div><svg class="a" style="left:662px;top:222px" width="7" height="4" viewBox="0 0 7 4" shape-rendering="crispEdges"><path d="M0 0h7v1h-1v1h-1v1h-1v1h-1v-1h-1v-1h-1v-1h-1z" fill="#000"/></svg><div class="t " style="left:579px;top:220px;">ODC_protected</div>
<div class="cb" style="left:330px;top:249px"><i></i></div><div class="t " style="left:347px;top:249.5px;width:50px;overflow:hidden;">Weak-type</div>
<div class="cb" style="left:330px;top:269px"><i></i></div><div class="t " style="left:347px;top:269.5px;">Transient</div>
<div class="cb" style="left:330px;top:290px"><i></i><svg width="7" height="7" viewBox="0 0 7 7" shape-rendering="crispEdges"><path d="M0 2h1v1h1v1h1v-1h1v-1h1v-1h1v-1h1v3h-1v1h-1v1h-1v1h-1v1h-1v-1h-1v-1h-1z" fill="#000"/></svg></div><div class="t " style="left:347px;top:290.5px;">Controlled</div>
<div class="cb" style="left:418px;top:249px"><i></i><svg width="7" height="7" viewBox="0 0 7 7" shape-rendering="crispEdges"><path d="M0 2h1v1h1v1h1v-1h1v-1h1v-1h1v-1h1v3h-1v1h-1v1h-1v1h-1v1h-1v-1h-1v-1h-1z" fill="#000"/></svg></div><div class="t " style="left:435px;top:249.5px;">Update</div>
<div class="cb" style="left:418px;top:270px"><i></i></div><div class="t " style="left:435px;top:270.5px;">Global ID</div>
<div class="cb" style="left:418px;top:290px"><i></i><svg width="7" height="7" viewBox="0 0 7 7" shape-rendering="crispEdges"><path d="M0 2h1v1h1v1h1v-1h1v-1h1v-1h1v-1h1v3h-1v1h-1v1h-1v1h-1v1h-1v-1h-1v-1h-1z" fill="#000"/></svg></div><div class="t " style="left:435px;top:290.5px;">Multikey</div>
<div class="cb" style="left:505px;top:249px"><i></i><svg width="7" height="7" viewBox="0 0 7 7" shape-rendering="crispEdges"><path d="M0 2h1v1h1v1h1v-1h1v-1h1v-1h1v-1h1v3h-1v1h-1v1h-1v1h-1v1h-1v-1h-1v-1h-1z" fill="#000"/></svg></div><div class="t " style="left:522px;top:249.5px;">Create</div>
<div class="cb" style="left:505px;top:270px"><i></i><svg width="7" height="7" viewBox="0 0 7 7" shape-rendering="crispEdges"><path d="M0 2h1v1h1v1h1v-1h1v-1h1v-1h1v-1h1v3h-1v1h-1v1h-1v1h-1v1h-1v-1h-1v-1h-1z" fill="#000"/></svg></div><div class="t " style="left:522px;top:270.5px;">Owning</div>
<div class="cb" style="left:505px;top:289px"><i></i></div><div class="t " style="left:522px;top:289.5px;">Depend</div>
<div class="cb" style="left:594px;top:291px"><i></i></div><div class="t " style="left:610px;top:291.5px;">Shared</div>
<div class="a" style="left:330px;top:319px;width:338px;height:63px;background:#fff;border-left:1px solid var(--sh);border-top:1px solid var(--sh)"></div>
<div class="a raised" style="left:331px;top:320px;width:100px;height:20px"><i></i></div>
<div class="t " style="left:334.5px;top:325px;">Key name</div>
<div class="a raised" style="left:431px;top:320px;width:60px;height:20px"><i></i></div>
<div class="t " style="left:434.5px;top:325px;">Type</div>
<div class="a raised" style="left:491px;top:320px;width:30px;height:20px"><i></i></div>
<div class="t " style="left:494.5px;top:325px;">Uni</div>
<div class="a raised" style="left:521px;top:320px;width:30px;height:20px"><i></i></div>
<div class="t " style="left:524.5px;top:325px;">Tmp</div>
<div class="a raised" style="left:551px;top:320px;width:30px;height:20px"><i></i></div>
<div class="t " style="left:554.5px;top:325px;">No e</div>
<div class="a raised" style="left:581px;top:320px;width:87px;height:20px"><i></i></div>
<div class="t " style="left:584.5px;top:325px;">Main index</div>
<div class="t " style="left:334px;top:341px;">pk</div>
<div class="t " style="left:434px;top:341px;">SET_SMAL</div>
<div class="fcb" style="left:498px;top:341px"><svg width="7" height="7" viewBox="0 0 7 7" shape-rendering="crispEdges"><path d="M0 2h1v1h1v1h1v-1h1v-1h1v-1h1v-1h1v3h-1v1h-1v1h-1v1h-1v1h-1v-1h-1v-1h-1z" fill="#000"/></svg></div>
<div class="fcb" style="left:528px;top:341px"></div>
<div class="fcb" style="left:558px;top:341px"></div>
<div class="fcb" style="left:588px;top:341px"></div>
<div class="t " style="left:330px;top:389px;">Source</div>
<div class="a" style="left:330px;top:403px;width:337px;height:30px;background:#fff;border-left:1px solid var(--sh);border-top:1px solid var(--sh)"></div>
<div class="a raised" style="left:331px;top:404px;width:70px;height:20px"><i></i></div>
<div class="t " style="left:334.5px;top:409px;">Name</div>
<div class="a raised" style="left:401px;top:404px;width:266px;height:20px"><i></i></div>
<div class="t " style="left:404.5px;top:409px;">Path/Expression</div>
<div class="a" style="left:89px;top:230px;width:194px;height:175px;background:rgba(0,0,0,0.5);box-shadow:1px 1px 2px 1px rgba(0,0,0,0.5)"></div>
<div class="a" style="left:87px;top:228px;width:196px;height:177px;background:var(--face);border:1px solid;border-color:var(--face) #55534a #55534a var(--face)"><i style="position:absolute;left:0;top:0;right:0;bottom:0;border:1px solid;border-color:#fff #b8a47c #b8a47c #fff"></i></div>
<div class="a" style="left:110px;top:231px;width:169px;height:21px;background:#0a246a"></div>
<div class="a" style="left:90px;top:231px;width:20px;height:21px;border:1px solid;border-color:#fff var(--sh) var(--sh) #fff"></div>
<div class="hsep" style="left:91px;top:318px;width:188px"></div>
<div class="t " style="left:114px;top:236px;color:#fff">Extent wizard</div>
<div class="t " style="left:206px;top:236px;color:#fff">Ctrl+Shift+I</div>
<div class="t " style="left:114px;top:257px;color:#bea878;text-shadow:1px 1px 0 #f6f2e8">Edit</div>
<div class="t " style="left:206px;top:257px;color:#bea878;text-shadow:1px 1px 0 #f6f2e8">F4</div>
<div class="t " style="left:114px;top:278px;"><u>I</u>nsert</div>
<div class="t " style="left:206px;top:278px;">Ctrl+I</div>
<div class="t " style="left:114px;top:299px;color:#bea878;text-shadow:1px 1px 0 #f6f2e8">Remove</div>
<div class="t " style="left:206px;top:299px;color:#bea878;text-shadow:1px 1px 0 #f6f2e8">Del</div>
<div class="t " style="left:114px;top:329px;">Refresh</div>
<div class="t " style="left:206px;top:329px;">Ctrl+R</div>
<div class="t " style="left:114px;top:349px;">RestoreDefaults</div>
<div class="t " style="left:114px;top:368px;">...more</div>
<div class="t " style="left:114px;top:388px;">...nav</div>
<svg class="a" style="left:266px;top:369px" width="4" height="7" viewBox="0 0 4 7" shape-rendering="crispEdges"><path d="M0 0h1v1h1v1h1v1h1v1h-1v1h-1v1h-1v1h-1z" fill="#000"/></svg>
<svg class="a" style="left:266px;top:388px" width="4" height="7" viewBox="0 0 4 7" shape-rendering="crispEdges"><path d="M0 0h1v1h1v1h1v1h1v1h-1v1h-1v1h-1v1h-1z" fill="#000"/></svg>
<svg class="a" style="left:91px;top:233px" width="18" height="18" viewBox="0 0 18 18"><defs><radialGradient id="q1" cx="0.4" cy="0.35" r="0.65"><stop offset="0" stop-color="#ffc868"/><stop offset="0.55" stop-color="#e87400"/><stop offset="1" stop-color="#e87400"/></radialGradient></defs><circle cx="9" cy="4.6" r="2.7" fill="url(#q1)"/><defs><radialGradient id="q2" cx="0.4" cy="0.35" r="0.65"><stop offset="0" stop-color="#ffff70"/><stop offset="0.55" stop-color="#d8c800"/><stop offset="1" stop-color="#d8c800"/></radialGradient></defs><circle cx="6.5" cy="9" r="2.7" fill="url(#q2)"/><defs><radialGradient id="q3" cx="0.4" cy="0.35" r="0.65"><stop offset="0" stop-color="#f070ff"/><stop offset="0.55" stop-color="#a000d0"/><stop offset="1" stop-color="#a000d0"/></radialGradient></defs><circle cx="11.5" cy="9" r="2.7" fill="url(#q3)"/><defs><radialGradient id="q4" cx="0.4" cy="0.35" r="0.65"><stop offset="0" stop-color="#90ff50"/><stop offset="0.55" stop-color="#18b000"/><stop offset="1" stop-color="#18b000"/></radialGradient></defs><circle cx="3.8" cy="14" r="2.7" fill="url(#q4)"/><defs><radialGradient id="q5" cx="0.4" cy="0.35" r="0.65"><stop offset="0" stop-color="#5878ff"/><stop offset="0.55" stop-color="#0018d0"/><stop offset="1" stop-color="#0018d0"/></radialGradient></defs><circle cx="9" cy="14" r="2.7" fill="url(#q5)"/><defs><radialGradient id="q6" cx="0.4" cy="0.35" r="0.65"><stop offset="0" stop-color="#ff7060"/><stop offset="0.55" stop-color="#d80000"/><stop offset="1" stop-color="#d80000"/></radialGradient></defs><circle cx="14" cy="14" r="2.7" fill="url(#q6)"/></svg>
<svg class="a" style="left:91px;top:255px" width="18" height="18" viewBox="0 0 18 18"><rect x="2.500" y="12" width="14.500" height="2.800" fill="#333" opacity="0.450"/><rect x="1.500" y="8.500" width="14" height="4.500" fill="#f4f4f4" stroke="#4a4a4a" stroke-width="1.100"/><path d="M3.500 10.500 h4" stroke="#444" stroke-width="1.100"/>
<path d="M8 10 L13.500 2.500 L15.500 4 L10 11.500 L7.500 12.200 Z" fill="#b8b8b8" stroke="#4a4a4a" stroke-width="0.800"/></svg>
<svg class="a" style="left:91px;top:275px" width="18" height="18" viewBox="0 0 18 18"><g transform="translate(1,0.8)"><path d="M5.600 8.300 L0.600 3.600 Q-0.300 2.300 0.800 1 Q2 -0.200 3.600 0.500 L9.300 4.300 Z" fill="#c87420"/><path d="M1.200 2.600 L6 6.600 M2.600 1.200 L7.600 4.800" stroke="#e89440" stroke-width="0.900"/><circle cx="7.500" cy="6.300" r="2.800" fill="#f89a30"/><circle cx="7.100" cy="5.800" r="1.400" fill="#ffb860"/></g><defs><radialGradient id="mb1" cx="0.4" cy="0.35" r="0.65"><stop offset="0" stop-color="#5878ff"/><stop offset="0.55" stop-color="#0818c0"/><stop offset="1" stop-color="#0818c0"/></radialGradient></defs><circle cx="3.8" cy="13.5" r="2.7" fill="url(#mb1)"/><defs><radialGradient id="mb2" cx="0.4" cy="0.35" r="0.65"><stop offset="0" stop-color="#b0ff70"/><stop offset="0.55" stop-color="#20b010"/><stop offset="1" stop-color="#20b010"/></radialGradient></defs><circle cx="13.8" cy="13.5" r="2.7" fill="url(#mb2)"/></svg>
<svg class="a" style="left:91px;top:297px" width="18" height="18" viewBox="0 0 18 18"><path d="M1.200 2.200 Q3 0.200 5 1.500 L9 5.500 L13.500 1.200 Q15.500 0.300 16.800 2.500 L12.300 8 L16.800 13 Q16.500 15.500 13.800 15.500 L9 10.800 L4.500 15.500 Q1.800 15.800 1.200 13.300 L5.800 8 Z" fill="#868686" stroke="#686868" stroke-width="0.900"/></svg>
<svg class="a" style="left:91px;top:326px" width="18" height="18" viewBox="0 0 18 18"><rect x="0.800" y="0.800" width="15.400" height="15.400" rx="4.500" fill="#f8c890"/><rect x="2.200" y="2.200" width="12.600" height="12.600" rx="4" fill="#fff" stroke="#0a0a0a" stroke-width="1.700"/>
<path d="M4 7.300 q4 -3.200 9 -0.800 l-0.800 -2.700 M13 6.500 l-3.200 0.600" stroke="#0a0a0a" stroke-width="1.100" fill="none"/><path d="M5 7.800 q3 -2.200 6.500 -0.500 q-3 1.200 -6.500 0.500z" fill="#f08818"/>
<path d="M13 9.700 q-4 3.200 -9 0.800 l0.800 2.700 M4 10.500 l3.200 -0.600" stroke="#0a0a0a" stroke-width="1.100" fill="none"/><path d="M12 9.200 q-3 2.200 -6.500 0.500 q3 -1.200 6.500 -0.500z" fill="#f08818"/></svg>
</body></html>
